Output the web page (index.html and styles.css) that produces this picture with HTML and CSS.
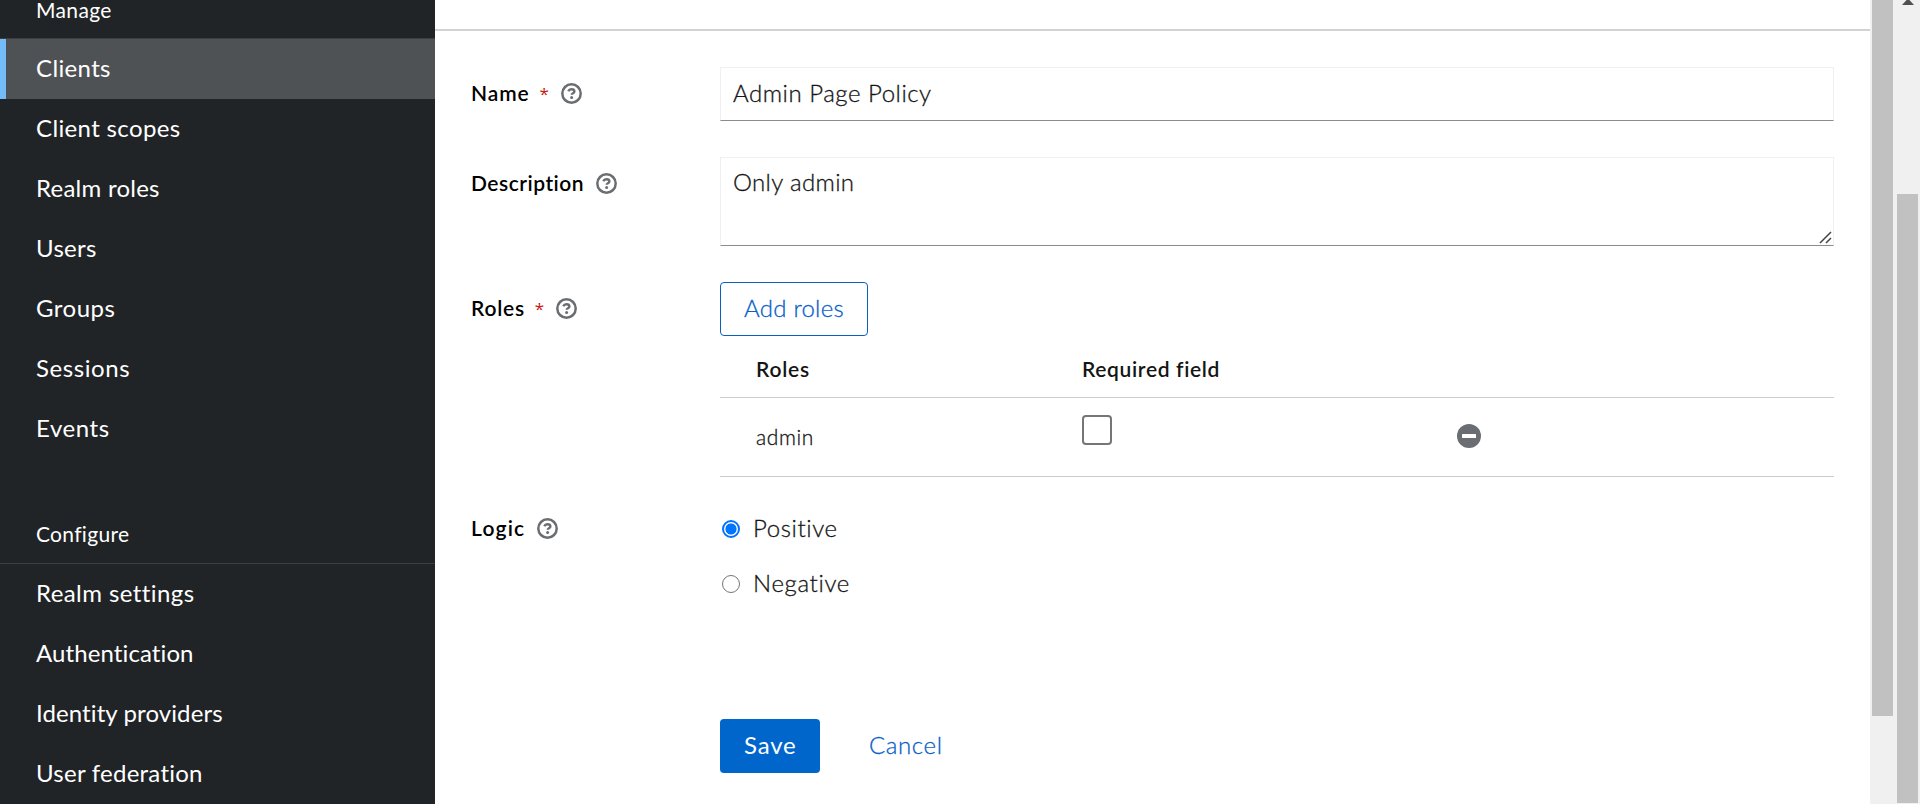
FILE: index.html
```html
<!DOCTYPE html>
<html lang="en">
<head>
<meta charset="utf-8">
<title>Policy details</title>
<link rel="stylesheet" href="styles.css">
</head>
<body>
<svg class="defs" width="0" height="0">
  <symbol id="help" viewBox="0 0 21 21">
    <circle cx="10.5" cy="10.5" r="9.2" fill="none" stroke="currentColor" stroke-width="2.5"/>
    <path d="M7.3 8.2C7.9 6.8 9 6.2 10.4 6.2c1.7 0 3 .8 3 2.2 0 1.8-2.7 1.8-2.7 3.4" fill="none" stroke="currentColor" stroke-width="2.4"/>
    <circle cx="10.6" cy="14.4" r="1.5" fill="currentColor"/>
  </symbol>
</svg>
<div class="app">
  <nav class="sidebar">
    <h2 class="nav-title first"><span class="t-manage">Manage</span></h2>
    <ul class="nav-list">
      <li class="nav-item current"><span class="t-clients">Clients</span></li>
      <li class="nav-item"><span class="t-scopes">Client scopes</span></li>
      <li class="nav-item"><span class="t-rroles">Realm roles</span></li>
      <li class="nav-item"><span class="t-users">Users</span></li>
      <li class="nav-item"><span class="t-groups">Groups</span></li>
      <li class="nav-item"><span class="t-sessions">Sessions</span></li>
      <li class="nav-item"><span class="t-events">Events</span></li>
    </ul>
    <h2 class="nav-title"><span class="t-configure">Configure</span></h2>
    <ul class="nav-list">
      <li class="nav-item"><span class="t-settings">Realm settings</span></li>
      <li class="nav-item"><span class="t-auth">Authentication</span></li>
      <li class="nav-item"><span class="t-idp">Identity providers</span></li>
      <li class="nav-item"><span class="t-fed">User federation</span></li>
    </ul>
  </nav>
  <main class="content">
    <div class="divider"></div>
    <form class="form">
      <div class="row name-row">
        <div class="label"><span class="t-name">Name</span><span class="star">*</span><svg class="help"><use href="#help"/></svg></div>
        <div class="input"><span class="t-policy">Admin Page Policy</span></div>
      </div>
      <div class="row desc-row">
        <div class="label"><span class="t-desc">Description</span><svg class="help"><use href="#help"/></svg></div>
        <div class="input area"><span class="t-only">Only admin</span>
          <svg class="grip" viewBox="0 0 13 13"><path d="M1 12 12 1M7 12l5-5" stroke="#444" stroke-width="1.5" fill="none"/></svg>
        </div>
      </div>
      <div class="row roles-row">
        <div class="label"><span class="t-roles">Roles</span><span class="star">*</span><svg class="help"><use href="#help"/></svg></div>
        <div class="field">
          <button type="button" class="btn secondary"><span class="t-add">Add roles</span></button>
          <div class="table">
            <div class="tr head"><div><span class="t-throles">Roles</span></div><div><span class="t-req">Required field</span></div><div></div></div>
            <div class="tr body"><div><span class="t-admin">admin</span></div><div><span class="check"></span></div>
              <div><svg class="minus" viewBox="0 0 24 24"><circle cx="12" cy="12" r="12" fill="#6a6e73"/><rect x="5" y="10" width="14" height="4" rx=".6" fill="#fff"/></svg></div></div>
          </div>
        </div>
      </div>
      <div class="row logic-row">
        <div class="label"><span class="t-logic">Logic</span><svg class="help"><use href="#help"/></svg></div>
        <div class="field">
          <div class="option"><span class="radio on"></span><span class="t-pos">Positive</span></div>
          <div class="option"><span class="radio"></span><span class="t-neg">Negative</span></div>
        </div>
      </div>
      <div class="actions">
        <button type="button" class="btn primary"><span class="t-save">Save</span></button>
        <button type="button" class="btn link"><span class="t-cancel">Cancel</span></button>
      </div>
    </form>
  </main>
  <div class="scroll inner"><div class="thumb"></div></div>
  <div class="scroll outer"><svg class="arrow" viewBox="0 0 12 5"><path d="M0 5 5.5 -1h1L12 5z" fill="#505050"/></svg><div class="thumb"></div></div>
</div>
</body>
</html>
```
FILE: styles.css
```css
* { box-sizing: border-box; }
body { margin: 0; height: 804px; overflow: hidden; background: #fff; color: #151515; font: 24px/36px Lato, "Open Sans", sans-serif; font-variant-ligatures: none; }
.defs { position: absolute; }
.app { display: flex; height: 804px; overflow: hidden; }

.sidebar { width: 435px; flex: none; background: #212427; color: #fff; }
.nav-title { margin: 0; padding: 33px 36px 0; height: 105px; border-bottom: 1px solid #3c3f42; font-size: 21px; font-weight: 400; line-height: 84px; }
.nav-title.first { height: 39px; padding-top: 0; line-height: 20px; }
.nav-list { list-style: none; margin: 0; padding: 0; }
.nav-item { height: 60px; padding-left: 36px; line-height: 58px; }
.nav-item.current { background: #4f5255; border-left: 6px solid #73bcf7; padding-left: 30px; }

.content { width: 1435px; flex: none; }
.divider { height: 2px; margin-top: 29px; background: #d2d2d2; }
.form { padding: 36px 36px 0 36px; }
.row { display: grid; grid-template-columns: 249px 1114px; }
.label { display: flex; align-items: center; height: 52px; font-size: 21px; font-weight: 600; color: #000; }
.star { width: 8px; margin: 1px 0 0 10px; color: #c9190b; font: 400 17px/36px "Open Sans", sans-serif; }
.help { width: 21px; height: 21px; margin: 1px 0 0 13px; color: #6a6e73; }
.input { height: 54px; padding: 0 12px; border: 1px solid #f0f0f0; border-bottom-color: #8a8d90; line-height: 50px; font-weight: 300; -webkit-text-stroke: .3px; }
.desc-row { margin-top: 36px; }
.area { position: relative; height: 89px; line-height: 48px; }
.grip { position: absolute; right: 1px; bottom: 1px; width: 13px; height: 13px; }
.roles-row { margin-top: 36px; }
.btn { height: 54px; padding: 0 0 2px 24px; border: 0; border-radius: 4px; background: none; font: 300 24px/50px Lato, "Open Sans", sans-serif; text-align: left; display: block; -webkit-text-stroke: .3px; }
.secondary { width: 148px; padding-left: 23px; border: 1px solid #0a5fc0; color: #0a5fc8; line-height: 48px; }
.table { padding-top: 6px; }
.tr { display: grid; grid-template-columns: 326px 375px 1fr; padding-left: 36px; border-bottom: 1px solid #cbcdcd; }
.head { height: 56px; font-size: 21px; font-weight: 600; line-height: 54px; }
.body { height: 79px; font-size: 21px; font-weight: 300; line-height: 78px; -webkit-text-stroke: .3px; }
.check { display: block; width: 30px; height: 30px; margin-top: 17px; border: 2px solid #767676; border-radius: 4px; }
.minus { display: block; width: 24px; height: 24px; margin-top: 26px; }
.logic-row { margin-top: 25px; }
.option { display: flex; align-items: center; height: 55px; font-weight: 300; line-height: 34px; padding-bottom: 3px; -webkit-text-stroke: .3px; }
.radio { width: 18px; height: 18px; margin: 2px 13px 0 2px; border: 1.5px solid #767676; border-radius: 50%; }
.radio.on { border: 2px solid #0075ff; background: radial-gradient(circle, #0075ff 5.2px, #fff 5.9px); }
.actions { display: flex; margin: 107px 0 0 249px; }
.primary { width: 100px; background: #06c; color: #fff; font-weight: 400; -webkit-text-stroke: 0; }
.link { margin-left: 25px; color: #0a5fc8; }

.scroll { flex: none; height: 804px; background: #f0f0f0; }
.inner { width: 25px; padding-left: 2px; }
.inner .thumb { width: 21px; height: 716px; background: #c1c1c1; }
.outer { width: 25px; padding-left: 2px; }
.outer .thumb { width: 21px; height: 609px; margin-top: 189px; background: #c1c1c1; }
.arrow { display: block; width: 12px; height: 5px; margin-left: 5px; }

/* Tracking per label */
.t-manage, .t-clients, .t-scopes { letter-spacing: .36px; }
.t-rroles { letter-spacing: .25px; }
.t-users, .t-configure { letter-spacing: .3px; }
.t-groups { letter-spacing: .5px; }
.t-sessions, .t-events { letter-spacing: .58px; }
.t-settings { letter-spacing: .42px; }
.t-auth { letter-spacing: .1px; }
.t-idp { letter-spacing: .1px; }
.t-fed { letter-spacing: .25px; }
.t-name { letter-spacing: .9px; }
.t-desc { letter-spacing: .5px; margin-right: -1px; }
.t-policy { letter-spacing: .52px; }
.t-only { letter-spacing: .35px; }
.t-roles, .t-throles { letter-spacing: .75px; }
.t-req { letter-spacing: .65px; }
.t-add { letter-spacing: .25px; }
.t-admin { letter-spacing: .6px; }
.t-logic { letter-spacing: 1.2px; margin-right: -1.5px; }
.t-pos { letter-spacing: .6px; }
.t-neg { letter-spacing: .65px; }
.t-save { letter-spacing: .8px; }
.t-cancel { letter-spacing: .6px; }
```
